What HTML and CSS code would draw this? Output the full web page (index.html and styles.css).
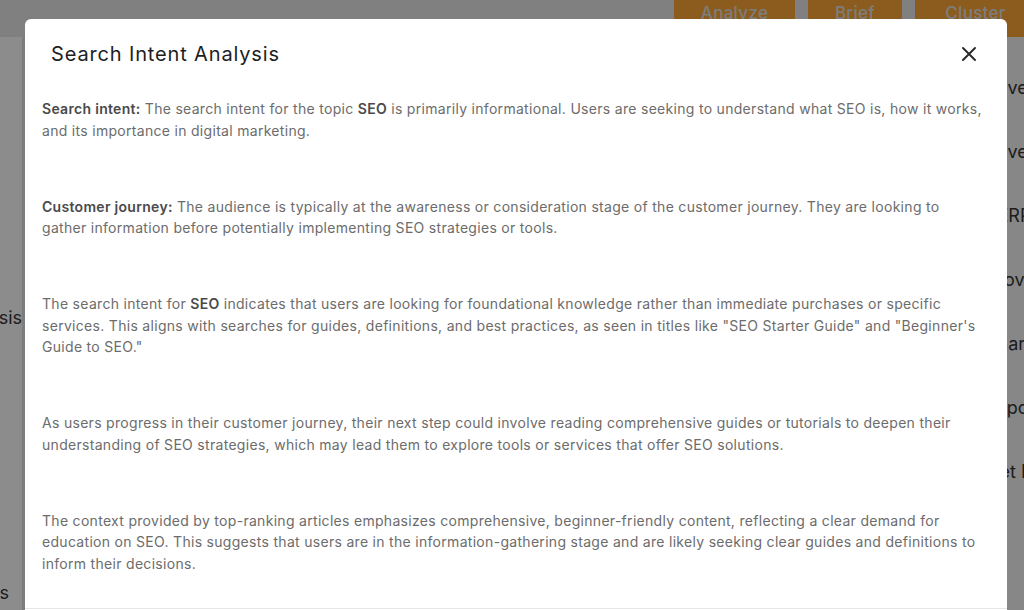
FILE: index.html
```html
<!DOCTYPE html>
<html lang="en">
<head>
<meta charset="utf-8">
<title>Search Intent Analysis</title>
<link rel="stylesheet" href="styles.css">
</head>
<body>
<div class="page">
  <header class="topbar">
    <button class="action">Analyze</button>
    <button class="action">Brief</button>
    <button class="action action-last">Cluster</button>
  </header>
  <div class="main">
    <aside class="left-col">
      <div class="left-card">
        <span class="left-word left-word-1">Analysis</span>
        <span class="left-word left-word-2">Settings</span>
      </div>
    </aside>
    <section class="center-col"></section>
    <aside class="right-col">
      <span class="right-word">Save</span>
      <span class="right-word">Save</span>
      <span class="right-word">SERP</span>
      <span class="right-word">Provide</span>
      <span class="right-word">Share</span>
      <span class="right-word">Export</span>
      <span class="right-word">Get Report</span>
    </aside>
  </div>
</div>

<div class="overlay"></div>

<div class="modal" role="dialog" aria-labelledby="modal-title">
  <div class="modal-header">
    <h2 class="modal-title" id="modal-title">Search Intent Analysis</h2>
    <button class="close-btn" aria-label="Close">
      <svg width="16" height="16" viewBox="0 0 16 16" aria-hidden="true">
        <path d="M2 2 L14 14 M14 2 L2 14" stroke="#2b2b2b" stroke-width="2" stroke-linecap="round" fill="none"/>
      </svg>
    </button>
  </div>
  <div class="modal-body">
    <p class="para"><strong>Search intent:</strong> The search intent for the topic <strong>SEO</strong> is primarily informational. Users are seeking to understand what SEO is, how it works, and its importance in digital marketing.</p>
    <p class="para"><strong>Customer journey:</strong> The audience is typically at the awareness or consideration stage of the customer journey. They are looking to gather information before potentially implementing SEO strategies or tools.</p>
    <p class="para">The search intent for <strong>SEO</strong> indicates that users are looking for foundational knowledge rather than immediate purchases or specific services. This aligns with searches for guides, definitions, and best practices, as seen in titles like "SEO Starter Guide" and "Beginner's Guide to SEO."</p>
    <p class="para">As users progress in their customer journey, their next step could involve reading comprehensive guides or tutorials to deepen their understanding of SEO strategies, which may lead them to explore tools or services that offer SEO solutions.</p>
    <p class="para">The context provided by top-ranking articles emphasizes comprehensive, beginner-friendly content, reflecting a clear demand for education on SEO. This suggests that users are in the information-gathering stage and are likely seeking clear guides and definitions to inform their decisions.</p>
  </div>
  <div class="modal-footer"></div>
</div>
</body>
</html>
```

FILE: styles.css
```css
* { box-sizing: border-box; }

html, body {
  margin: 0;
  padding: 0;
  width: 1024px;
  height: 610px;
  overflow: hidden;
}

body {
  font-family: Inter, "Noto Sans", "Liberation Sans", sans-serif;
  background: #e8e8e8;
  color: #222;
  position: relative;
}

/* ---------- underlying page ---------- */
.page {
  display: flex;
  flex-direction: column;
  height: 610px;
}

.topbar {
  height: 37px;
  display: flex;
  justify-content: flex-end;
  gap: 13px;
  margin-right: -12px;
  background: #e2e2e2;
}

.action {
  border: none;
  background: #f5a234;
  color: #dcdcdc;
  font-family: inherit;
  font-size: 17px;
  font-weight: 500;
  letter-spacing: 0.3px;
  height: 37px;
  padding: 0 0 11px;
  line-height: 23px;
  width: 121px;
}
.action:nth-child(2) { width: 94px; }

.main {
  flex: 1;
  display: flex;
}

.left-col {
  width: 25px;
  background: #dcdcdc;
  display: flex;
}

.left-card {
  width: 22px;
  background: #f6f6f6;
  display: flex;
  flex-direction: column;
  align-items: flex-end;
  overflow: hidden;
  padding-top: 269px;
}

.left-word {
  font-size: 18px;
  color: #333;
  white-space: nowrap;
  line-height: 24px;
}
.left-word-2 {
  margin-top: 251px;
  margin-right: 13px;
}

.center-col {
  flex: 1;
  background: #ffffff;
  margin-top: 6px;
  border-top-left-radius: 14px;
}

.right-col {
  width: 40px;
  margin-left: -23px;
  background: #ededed;
  display: flex;
  flex-direction: column;
  padding-top: 39px;
  gap: 40px;
  overflow: hidden;
}

.right-word {
  font-size: 18px;
  color: #333;
  white-space: nowrap;
  line-height: 24px;
  padding-left: 2px;
}

.overlay {
  position: absolute;
  inset: 0;
  background: rgba(0, 0, 0, 0.43);
}

/* ---------- modal ---------- */
.modal {
  position: absolute;
  left: 25px;
  top: 19px;
  width: 982px;
  height: 600px;
  background: #ffffff;
  border-radius: 6px;
  display: flex;
  flex-direction: column;
}

.modal-header {
  display: flex;
  align-items: center;
  justify-content: space-between;
  padding: 21px 30px 21px 26px;
}

.modal-title {
  margin: 0;
  font-size: 20px;
  font-weight: 400;
  letter-spacing: 0.85px;
  line-height: 28px;
  color: #1e1e1e;
}

.close-btn {
  border: none;
  background: none;
  padding: 0;
  width: 16px;
  height: 16px;
  display: flex;
}

.modal-body {
  padding: 9px 25px 0 17px;
  flex: 1;
  overflow: hidden;
}

.para {
  margin: 0 0 54.5px;
  font-size: 14px;
  line-height: 21.5px;
  letter-spacing: 0.3px;
  color: #6c6c6c;
}

.para strong {
  font-weight: 600;
  color: #4a4a4a;
}

.modal-footer {
  border-top: 1px solid #e6e6e6;
  height: 11px;
  flex: none;
}
```
